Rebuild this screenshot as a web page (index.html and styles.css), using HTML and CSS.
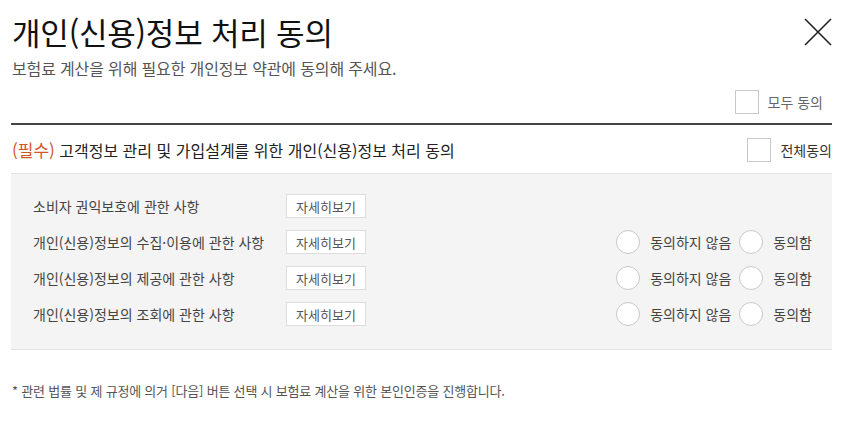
FILE: index.html
```html
<!DOCTYPE html>
<html lang="ko">
<head>
<meta charset="utf-8">
<link rel="stylesheet" href="styles.css">
</head>
<body>
<div class="modal">
  <div class="head">
    <h1 class="title">개인(신용)정보 처리 동의</h1>
    <button class="close" aria-label="닫기">
      <svg width="28" height="28" viewBox="0 0 28 28"><path d="M1 1L27 27M27 1L1 27" stroke="#222" stroke-width="1.6" fill="none"/></svg>
    </button>
  </div>
  <p class="sub">보험료 계산을 위해 필요한 개인정보 약관에 동의해 주세요.</p>
  <div class="all-row">
    <label class="check"><span class="box"></span><span class="check-text muted">모두 동의</span></label>
  </div>
  <div class="section-head">
    <div class="section-title"><span class="req">(필수)</span> 고객정보 관리 및 가입설계를 위한 개인(신용)정보 처리 동의</div>
    <label class="check"><span class="box"></span><span class="check-text">전체동의</span></label>
  </div>
  <div class="terms">
    <div class="term">
      <span class="term-name">소비자 권익보호에 관한 사항</span>
      <button class="detail">자세히보기</button>
    </div>
    <div class="term">
      <span class="term-name">개인(신용)정보의 수집·이용에 관한 사항</span>
      <button class="detail">자세히보기</button>
      <div class="choices">
        <label class="radio"><span class="circle"></span><span class="r-text">동의하지 않음</span></label>
        <label class="radio"><span class="circle"></span><span class="r-text">동의함</span></label>
      </div>
    </div>
    <div class="term">
      <span class="term-name">개인(신용)정보의 제공에 관한 사항</span>
      <button class="detail">자세히보기</button>
      <div class="choices">
        <label class="radio"><span class="circle"></span><span class="r-text">동의하지 않음</span></label>
        <label class="radio"><span class="circle"></span><span class="r-text">동의함</span></label>
      </div>
    </div>
    <div class="term">
      <span class="term-name">개인(신용)정보의 조회에 관한 사항</span>
      <button class="detail">자세히보기</button>
      <div class="choices">
        <label class="radio"><span class="circle"></span><span class="r-text">동의하지 않음</span></label>
        <label class="radio"><span class="circle"></span><span class="r-text">동의함</span></label>
      </div>
    </div>
  </div>
  <p class="note">* 관련 법률 및 제 규정에 의거 [다음] 버튼 선택 시 보험료 계산을 위한 본인인증을 진행합니다.</p>
</div>
</body>
</html>
```
FILE: styles.css
```css
* { box-sizing: border-box; }
html, body { margin: 0; padding: 0; background: #fff; }
body {
  font-family: "Noto Sans CJK KR", "Noto Sans", sans-serif;
  color: #333;
}
.modal {
  width: 854px;
  padding: 0 22px 0 11px;
}
.head {
  display: flex;
  justify-content: space-between;
  align-items: flex-start;
  height: 58px;
}
.title {
  margin: 0;
  padding: 10px 0 0 1px;
  font-size: 31px;
  font-weight: 400;
  line-height: 44px;
  color: #111;
  letter-spacing: -0.2px;
}
.close {
  border: 0;
  background: none;
  padding: 0;
  margin: 18px 0 0 0;
  width: 28px;
  height: 28px;
  cursor: pointer;
}
.close svg { display: block; }
.sub {
  margin: 0;
  padding-left: 1px;
  font-size: 16px;
  line-height: 24px;
  color: #555;
  margin-top: -2px;
  letter-spacing: -0.15px;
}
.all-row {
  display: flex;
  justify-content: flex-end;
  margin-top: 6px;
  padding-right: 9px;
  height: 39px;
  padding-top: 4px;
  border-bottom: 2px solid #444;
}
.check {
  display: flex;
  align-items: center;
  gap: 9px;
  height: 24px;
}
.box {
  width: 24px;
  height: 24px;
  border: 1px solid #c8c8c8;
  background: #fff;
}
.check-text { font-size: 14px; color: #333; }
.check-text.muted { color: #666; }
.section-head {
  display: flex;
  justify-content: space-between;
  align-items: center;
  height: 48px;
  padding: 1px 0 0 1px;
}
.section-title {
  font-size: 16px;
  color: #222;
}
.req { color: #d3572b; font-size: 17px; }
.terms {
  background: #f4f4f4;
  border-top: 1px solid #e3e3e3;
  border-bottom: 1px solid #e3e3e3;
  padding: 20px 20px 23px 22px;
  display: flex;
  flex-direction: column;
  gap: 12px;
}
.term {
  display: flex;
  align-items: center;
  height: 24px;
}
.term-name {
  width: 253px;
  font-size: 14px;
  color: #444;
}
.detail {
  width: 80px;
  height: 24px;
  border: 1px solid #ddd;
  background: #fff;
  font-family: inherit;
  font-size: 13px;
  color: #555;
  padding: 0;
}
.choices {
  margin-left: auto;
  display: flex;
  gap: 8px;
}
.radio {
  display: flex;
  align-items: center;
  gap: 10px;
}
.circle {
  width: 24px;
  height: 24px;
  border: 1px solid #c8c8c8;
  border-radius: 50%;
  background: #fff;
}
.r-text { font-size: 14px; color: #444; }
.note {
  margin: 31px 0 0 1px;
  font-size: 13px;
  color: #555;
  letter-spacing: -0.2px;
}
```
